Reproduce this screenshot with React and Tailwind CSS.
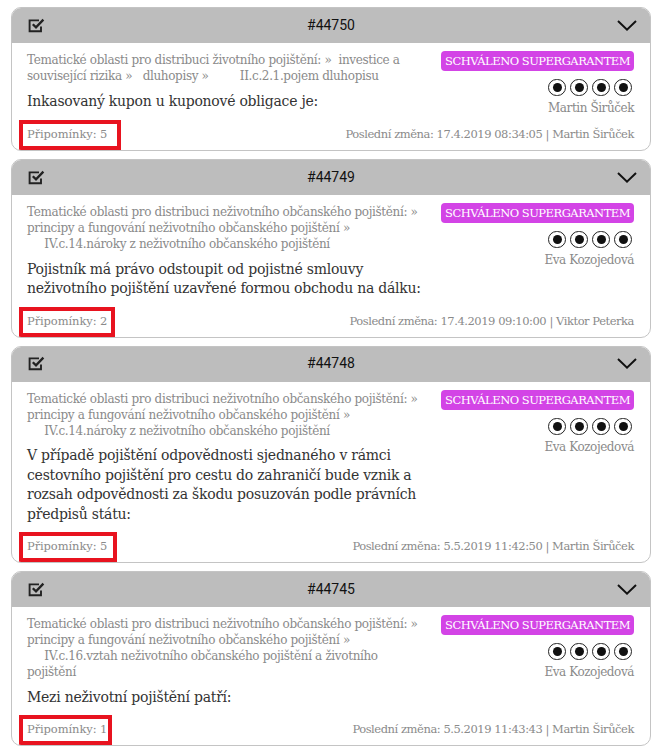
const serif = "font-['DejaVu_Serif','Liberation_Serif',serif]";

function CheckIcon() {
  return (
    <svg width="17" height="15" viewBox="0 0 17 15" fill="none" stroke="#222" className="block">
      <path d="M13 8.5V13.2H1.6V2.4H11" strokeWidth="1.9" />
      <path d="M4.8 6.2L8 9.4L15.4 1.6" strokeWidth="2.3" />
    </svg>
  );
}

function Chevron() {
  return (
    <svg width="20" height="11" viewBox="0 0 20 11" fill="none" stroke="#111" strokeWidth="2" className="block">
      <path d="M1 1L10 9.6L19 1" />
    </svg>
  );
}

function Radio() {
  return (
    <span className="flex h-[17px] w-[18px] items-center justify-center rounded-full border-[1.25px] border-[#222]">
      <span className="h-[9px] w-[9px] rounded-full bg-[#111]" />
    </span>
  );
}

const cards = [
  {
    id: "#44750",
    path: ["Tematické oblasti pro distribuci životního pojištění: »  investice a", "související rizika »   dluhopisy »         II.c.2.1.pojem dluhopisu"],
    q: ["Inkasovaný kupon u kuponové obligace je:"],
    author: "Martin Širůček",
    count: 5,
    box: "w-[102px]",
    change: "Poslední změna: 17.4.2019 08:34:05 | Martin Širůček",
  },
  {
    id: "#44749",
    path: ["Tematické oblasti pro distribuci neživotního občanského pojištění: »", "principy a fungování neživotního občanského pojištění »", "     IV.c.14.nároky z neživotního občanského pojištění"],
    q: ["Pojistník má právo odstoupit od pojistné smlouvy", "neživotního pojištění uzavřené formou obchodu na dálku:"],
    author: "Eva Kozojedová",
    count: 2,
    box: "w-[96px]",
    change: "Poslední změna: 17.4.2019 09:10:00 | Viktor Peterka",
  },
  {
    id: "#44748",
    path: ["Tematické oblasti pro distribuci neživotního občanského pojištění: »", "principy a fungování neživotního občanského pojištění »", "     IV.c.14.nároky z neživotního občanského pojištění"],
    q: ["V případě pojištění odpovědnosti sjednaného v rámci", "cestovního pojištění pro cestu do zahraničí bude vznik a", "rozsah odpovědnosti za škodu posuzován podle právních", "předpisů státu:"],
    author: "Eva Kozojedová",
    count: 5,
    box: "w-[98px]",
    change: "Poslední změna: 5.5.2019 11:42:50 | Martin Širůček",
  },
  {
    id: "#44745",
    path: ["Tematické oblasti pro distribuci neživotního občanského pojištění: »", "principy a fungování neživotního občanského pojištění »", "     IV.c.16.vztah neživotního občanského pojištění a životního", "pojištění"],
    q: ["Mezi neživotní pojištění patří:"],
    author: "Eva Kozojedová",
    count: 1,
    box: "w-[93px]",
    change: "Poslední změna: 5.5.2019 11:43:43 | Martin Širůček",
  },
];

function Card({ c }) {
  return (
    <div className="overflow-hidden rounded-[10px] border border-[#c4c4c4] bg-white">
      <div className="-mx-px -mt-px flex h-[36px] items-center justify-between bg-[#bdbdbd] pl-[17px] pr-[14px]">
        <CheckIcon />
        <span className="font-['Roboto',sans-serif] text-[14px] text-[#111]">{c.id}</span>
        <Chevron />
      </div>
      <div className="flex justify-between pl-[15px] pr-[16px] pt-[9px]">
        <div className="w-[400px]">
          <div className="whitespace-pre text-[12px] leading-[16px] tracking-[-0.35px] text-[#8a8a8a]">
            {c.path.map((l, i) => (
              <div key={i}>{l}</div>
            ))}
          </div>
          <div className="mt-[7.5px] whitespace-pre text-[14px] leading-[19.5px] tracking-[-0.25px] text-[#333]">
            {c.q.map((l, i) => (
              <div key={i}>{l}</div>
            ))}
          </div>
        </div>
        <div className="-mt-[1px] flex h-[61px] shrink-0 flex-col items-end">
          <span className="whitespace-nowrap rounded-[4px] bg-[#d344e6] px-[4px] text-[11.5px] leading-[20px] tracking-[-0.5px] text-white">SCHVÁLENO SUPERGARANTEM</span>
          <div className="mr-[2px] mt-[8px] flex gap-[4px]">
            <Radio />
            <Radio />
            <Radio />
            <Radio />
          </div>
          <span className="mt-[4px] text-[12px] leading-[16px] tracking-[-0.43px] text-[#8a8a8a]">{c.author}</span>
        </div>
      </div>
      <div className="mt-[14px] flex items-center justify-between pb-[8px] pl-[15px] pr-[16px] text-[11.5px] leading-[16px] text-[#8a8a8a]">
        <span className="relative tracking-[-0.1px]">
          Připomínky: {c.count}
          <span className={`absolute -left-[8px] -top-[6px] h-[30px] border-4 border-[#e8131f] ${c.box}`} />
        </span>
        <span className="tracking-[-0.45px]">{c.change}</span>
      </div>
    </div>
  );
}

export default function App() {
  return (
    <div className={`${serif} flex w-[660px] flex-col gap-[8px] pl-[11px] pr-[9px] pt-[7px]`}>
      {cards.map((c) => (
        <Card key={c.id} c={c} />
      ))}
    </div>
  );
}
